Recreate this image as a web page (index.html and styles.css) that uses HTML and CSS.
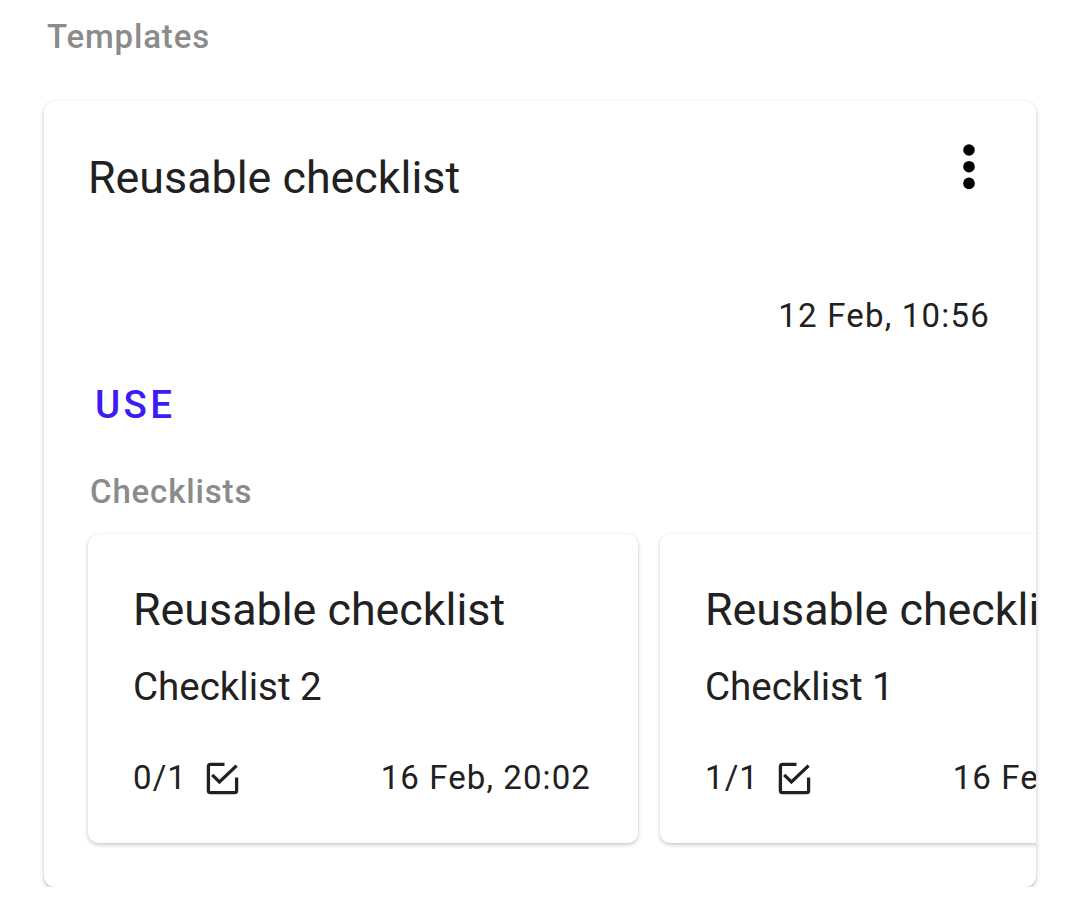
FILE: index.html
```html
<!DOCTYPE html>
<html lang="en">
<head>
<meta charset="utf-8">
<title>Templates</title>
<link rel="stylesheet" href="styles.css">
</head>
<body>
<main class="page">
  <h2 class="section-label">Templates</h2>
  <section class="template-card">
    <div class="template-header">
      <h3 class="template-title">Reusable checklist</h3>
      <svg class="kebab" width="12" height="46" viewBox="0 0 12 46" aria-hidden="true">
        <circle cx="6" cy="6" r="5.8" fill="#000"/>
        <circle cx="6" cy="22.7" r="5.8" fill="#000"/>
        <circle cx="6" cy="39.4" r="5.8" fill="#000"/>
      </svg>
    </div>
    <div class="template-date">12 Feb, 10:56</div>
    <div class="use-btn">USE</div>
    <h4 class="sub-label">Checklists</h4>
    <div class="checklist-row">
      <article class="checklist-card">
        <div class="cl-title">Reusable checklist</div>
        <div class="cl-name">Checklist 2</div>
        <div class="cl-footer">
          <div class="cl-progress">
            <span>0/1</span>
            <svg class="check-icon" width="33" height="33" viewBox="0 0 33 33" aria-hidden="true">
              <path d="M18.5 2.4H4.6Q2.4 2.4 2.4 4.6V28.4Q2.4 30.6 4.6 30.6H28.4Q30.6 30.6 30.6 28.4V15.5" fill="none" stroke="#212121" stroke-width="3.3" stroke-linejoin="round"/>
              <path d="M6.2 12.8L13.4 20L30.6 3.6" fill="none" stroke="#212121" stroke-width="3.3"/>
            </svg>
          </div>
          <span class="cl-date">16 Feb, 20:02</span>
        </div>
      </article>
      <article class="checklist-card">
        <div class="cl-title">Reusable checklist</div>
        <div class="cl-name">Checklist 1</div>
        <div class="cl-footer">
          <div class="cl-progress">
            <span>1/1</span>
            <svg class="check-icon" width="33" height="33" viewBox="0 0 33 33" aria-hidden="true">
              <path d="M18.5 2.4H4.6Q2.4 2.4 2.4 4.6V28.4Q2.4 30.6 4.6 30.6H28.4Q30.6 30.6 30.6 28.4V15.5" fill="none" stroke="#212121" stroke-width="3.3" stroke-linejoin="round"/>
              <path d="M6.2 12.8L13.4 20L30.6 3.6" fill="none" stroke="#212121" stroke-width="3.3"/>
            </svg>
          </div>
          <span class="cl-date">16 Feb, 20:02</span>
        </div>
      </article>
    </div>
  </section>
</main>
</body>
</html>
```

FILE: styles.css
```css
* { box-sizing: border-box; }

html, body {
  margin: 0;
  padding: 0;
  background: #ffffff;
}

body {
  font-family: Roboto, "Liberation Sans", sans-serif;
  color: #212121;
}

.page {
  padding: 0 44px;
  width: 1080px;
}

.section-label {
  margin: 0;
  padding: 17px 0 0 3px;
  font-size: 33px;
  line-height: 40px;
  font-weight: 500;
  letter-spacing: 0.85px;
  color: #8b8b8b;
}

.template-card {
  margin-top: 44px;
  width: 992px;
  background: #fff;
  border-radius: 11px;
  box-shadow: 0 3px 5px rgba(0, 0, 0, 0.2), 0 0 2px rgba(0, 0, 0, 0.1);
  padding: 51px 0 44px 44px;
  overflow: hidden;
}

.template-header {
  display: flex;
  justify-content: space-between;
  align-items: flex-start;
  padding-right: 47px;
}

.template-title {
  margin: 0;
  font-size: 44.8px;
  line-height: 52px;
  font-weight: 400;
  color: #212121;
}

.kebab {
  margin-top: -8px;
  margin-right: 14px;
}

.template-date {
  margin-top: 92px;
  padding-right: 46px;
  text-align: right;
  font-size: 33px;
  line-height: 40px;
  letter-spacing: 1.2px;
  color: #212121;
}

.use-btn {
  margin-top: 47px;
  padding-left: 7px;
  font-size: 38.5px;
  line-height: 44px;
  font-weight: 500;
  letter-spacing: 3.4px;
  color: #3b1cf2;
}

.sub-label {
  margin: 45px 0 0 2px;
  font-size: 33px;
  line-height: 40px;
  font-weight: 500;
  letter-spacing: 0.85px;
  color: #8b8b8b;
}

.checklist-row {
  margin-top: 22px;
  display: flex;
  gap: 22px;
}

.checklist-card {
  flex: 0 0 550px;
  background: #fff;
  border-radius: 10px;
  box-shadow: 0 2px 4px rgba(0, 0, 0, 0.2), 0 0 1px rgba(0, 0, 0, 0.12);
  padding: 50px 47px 45px 45px;
}

.cl-title {
  font-size: 44.8px;
  line-height: 52px;
  white-space: nowrap;
}

.cl-name {
  margin-top: 29px;
  font-size: 38.5px;
  line-height: 44px;
  white-space: nowrap;
}

.cl-footer {
  margin-top: 49px;
  display: flex;
  justify-content: space-between;
  align-items: center;
  font-size: 33px;
  line-height: 40px;
  letter-spacing: 1.1px;
  white-space: nowrap;
}

.cl-progress {
  display: flex;
  align-items: center;
  gap: 19px;
}

.check-icon {
  display: block;
}
```
